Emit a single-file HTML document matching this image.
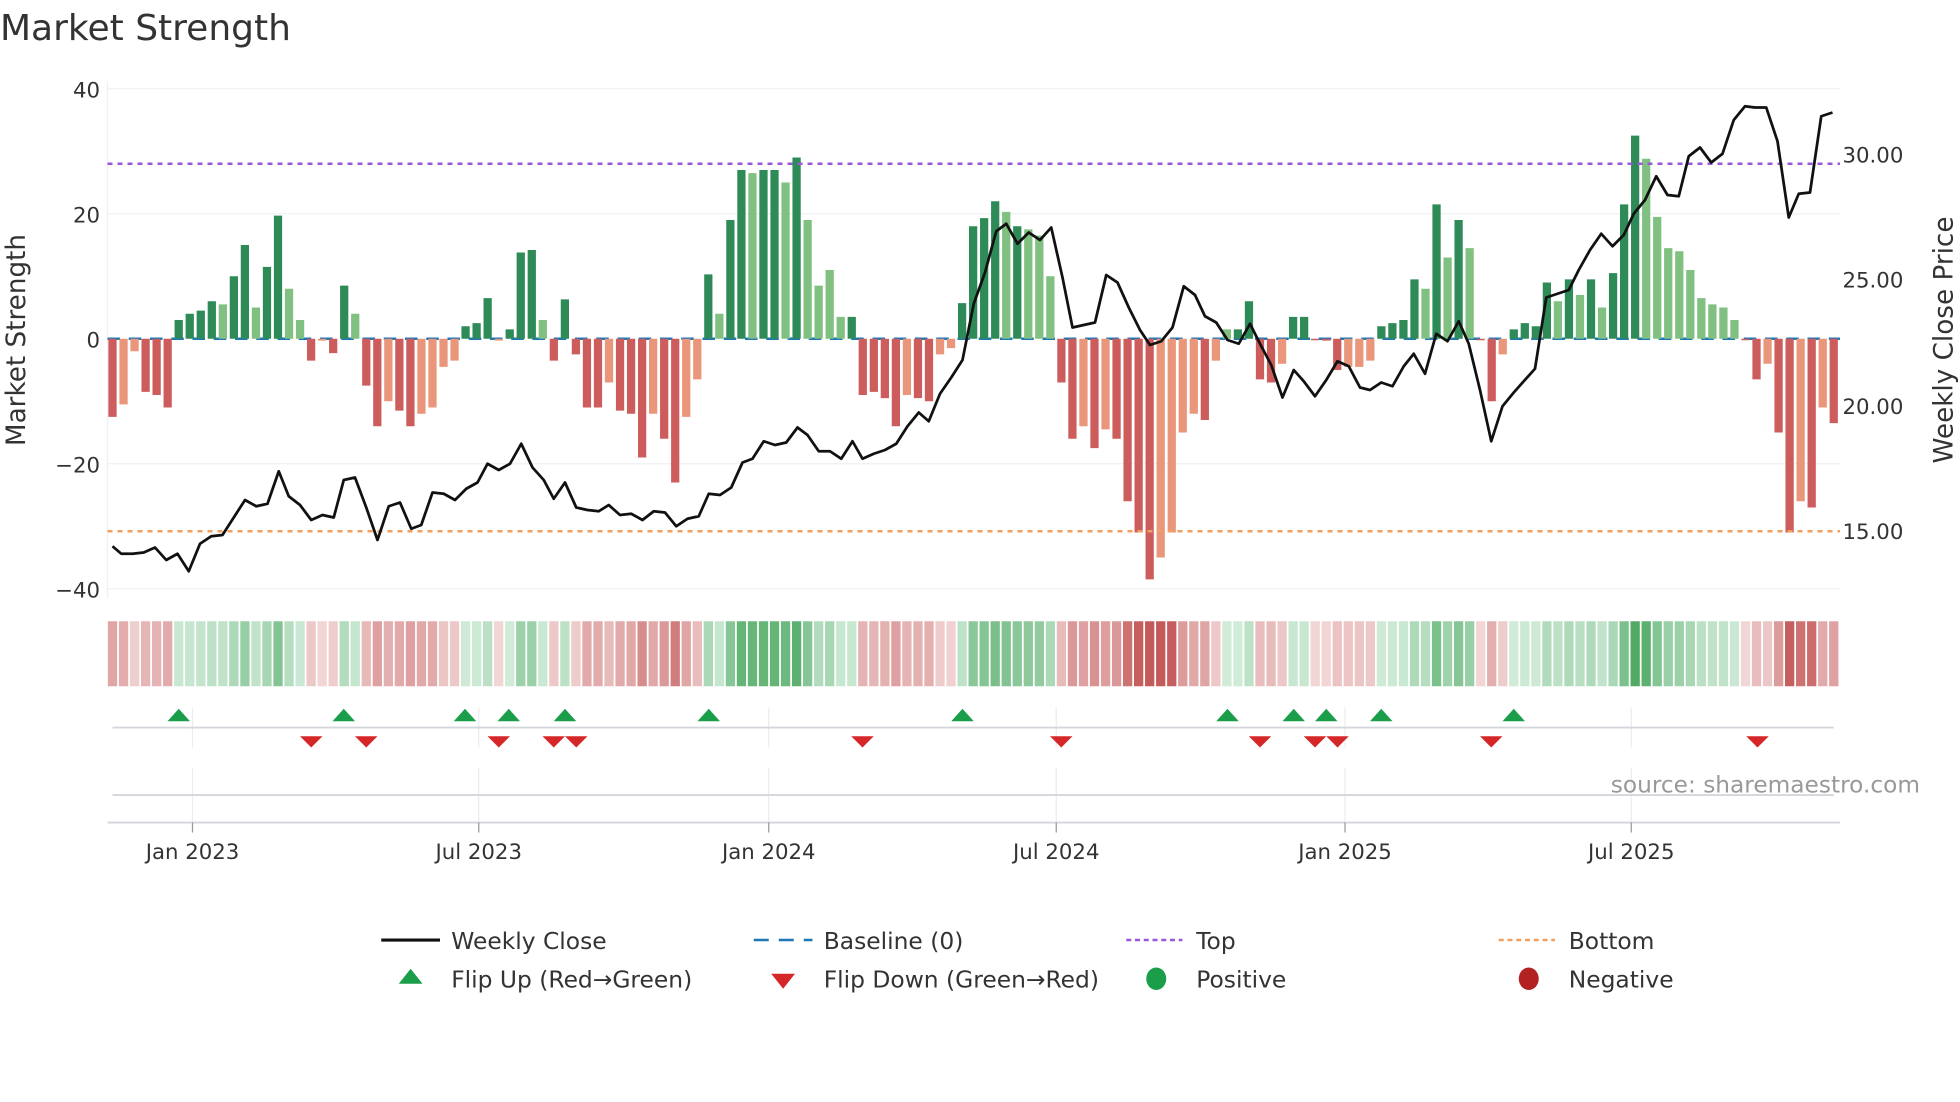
<!DOCTYPE html>
<html><head><meta charset="utf-8"><style>
html,body{margin:0;padding:0;background:#fff;width:1960px;height:1102px;overflow:hidden}
svg{display:block}
text{font-family:"DejaVu Sans","Liberation Sans",sans-serif;fill:#333}
</style></head><body>
<svg id="s" width="1960" height="1102" viewBox="0 0 1568 881.6" xmlns="http://www.w3.org/2000/svg">
<text x="0" y="32" font-size="28.8">Market Strength</text>
<g stroke="#eef0f4" stroke-width="1">
<line x1="86" x2="1472" y1="71" y2="71"/><line x1="86" x2="1472" y1="171" y2="171"/>
<line x1="86" x2="1472" y1="371" y2="371"/><line x1="86" x2="1472" y1="471" y2="471"/>
<line x1="86" x2="86" y1="65" y2="478"/>
</g>
<g font-size="17" text-anchor="end">
<text x="80" y="78">40</text><text x="80" y="178">20</text><text x="80" y="278">0</text>
<text x="80" y="378">−20</text><text x="80" y="478">−40</text></g>
<g font-size="17"><text x="1474" y="130">30.00</text><text x="1474" y="230">25.00</text>
<text x="1474" y="331">20.00</text><text x="1474" y="431">15.00</text></g>
<text font-size="21" transform="translate(20,272) rotate(-90)" text-anchor="middle">Market Strength</text>
<text font-size="21" transform="translate(1562,272) rotate(-90)" text-anchor="middle">Weekly Close Price</text>
<line x1="86" x2="1472" y1="271" y2="271" stroke="#1f77b4" stroke-width="2" stroke-dasharray="10,7"/>
<g id="bars"></g>
<line x1="86" x2="1472" y1="131" y2="131" stroke="#9b59d9" stroke-width="2" stroke-dasharray="4,4"/>
<line x1="86" x2="1472" y1="425" y2="425" stroke="#f0a060" stroke-width="2" stroke-dasharray="4,4"/>
<polyline id="price" fill="none" stroke="#111" stroke-width="2.2" stroke-linejoin="round"/>
<g id="heat"></g>
<g stroke="#eaecf0" stroke-width="1">
<line x1="154" x2="154" y1="566" y2="598"/><line x1="383" x2="383" y1="566" y2="598"/><line x1="615" x2="615" y1="566" y2="598"/><line x1="845" x2="845" y1="566" y2="598"/><line x1="1076" x2="1076" y1="566" y2="598"/><line x1="1305" x2="1305" y1="566" y2="598"/>
<line x1="154" x2="154" y1="614" y2="660"/><line x1="383" x2="383" y1="614" y2="660"/><line x1="615" x2="615" y1="614" y2="660"/><line x1="845" x2="845" y1="614" y2="660"/><line x1="1076" x2="1076" y1="614" y2="660"/><line x1="1305" x2="1305" y1="614" y2="660"/>
</g>
<line x1="90" x2="1467" y1="582" y2="582" stroke="#d4d6dc" stroke-width="1.5"/>
<line x1="90" x2="1467" y1="636" y2="636" stroke="#d4d6dc" stroke-width="1.5"/>
<line x1="86" x2="1472" y1="658" y2="658" stroke="#d4d6dc" stroke-width="1.5"/>
<g id="flips"></g>
<text x="1536" y="634" font-size="18.6" text-anchor="end" style="fill:#999">source: sharemaestro.com</text>
<g stroke="#999" stroke-width="1"><line x1="154" x2="154" y1="658" y2="666"/><line x1="383" x2="383" y1="658" y2="666"/><line x1="615" x2="615" y1="658" y2="666"/><line x1="845" x2="845" y1="658" y2="666"/><line x1="1076" x2="1076" y1="658" y2="666"/><line x1="1305" x2="1305" y1="658" y2="666"/></g>
<g font-size="17" text-anchor="middle">
<text x="154" y="687">Jan 2023</text><text x="383" y="687">Jul 2023</text><text x="615" y="687">Jan 2024</text>
<text x="845" y="687">Jul 2024</text><text x="1076" y="687">Jan 2025</text><text x="1305" y="687">Jul 2025</text></g>
<g font-size="18.7">
<line x1="305" x2="352" y1="752" y2="752" stroke="#111" stroke-width="2.5"/><text x="361" y="759">Weekly Close</text>
<line x1="603" x2="650" y1="752" y2="752" stroke="#1f77b4" stroke-width="2" stroke-dasharray="12,8"/><text x="659" y="759">Baseline (0)</text>
<line x1="901" x2="946" y1="752" y2="752" stroke="#9b59d9" stroke-width="2" stroke-dasharray="4,3"/><text x="957" y="759">Top</text>
<line x1="1199" x2="1244" y1="752" y2="752" stroke="#f0a060" stroke-width="2" stroke-dasharray="4,3"/><text x="1255" y="759">Bottom</text>
<polygon points="319,787 338,787 328.5,775" fill="#1a9e4a"/><text x="361" y="790">Flip Up (Red→Green)</text>
<polygon points="617,779 636,779 626.5,791" fill="#d62728"/><text x="659" y="790">Flip Down (Green→Red)</text>
<ellipse cx="925" cy="783" rx="8" ry="9" fill="#1a9e4a"/><text x="957" y="790">Positive</text>
<ellipse cx="1223" cy="783" rx="8" ry="9" fill="#b22222"/><text x="1255" y="790">Negative</text>
</g>
</svg>
<script>
var NS="http://www.w3.org/2000/svg";
var v=[[-12.5,0],[-10.5,1],[-2,1],[-8.5,0],[-9,0],[-11,0],[3,0],[4,0],[4.5,0],[6,0],[5.5,1],[10,0],[15,0],[5,1],[11.5,0],[19.7,0],[8,1],[3,1],[-3.5,0],[-0.3,1],[-2.3,0],[8.5,0],[4,1],[-7.5,0],[-14,0],[-10,1],[-11.5,0],[-14,0],[-12,1],[-11,1],[-4.5,1],[-3.5,1],[2,0],[2.5,0],[6.5,0],[-0.3,1],[1.5,0],[13.8,0],[14.2,0],[3,1],[-3.5,0],[6.3,0],[-2.5,0],[-11,0],[-11,0],[-7,1],[-11.5,0],[-12,0],[-19,0],[-12,1],[-16,0],[-23,0],[-12.5,1],[-6.5,1],[10.3,0],[4,1],[19,0],[27,0],[26.5,1],[27,0],[27,0],[25,1],[29,0],[19,1],[8.5,1],[11,1],[3.5,1],[3.5,0],[-9,0],[-8.5,0],[-9.5,0],[-14,0],[-9,1],[-9.5,0],[-10,0],[-2.5,1],[-1.5,1],[5.7,0],[18,0],[19.3,0],[22,0],[20.3,1],[18,0],[17.5,1],[16.5,1],[10,1],[-7,0],[-16,0],[-14,1],[-17.5,0],[-14.5,1],[-16,0],[-26,0],[-31,0],[-38.5,0],[-35,1],[-31,1],[-15,1],[-12,1],[-13,0],[-3.5,1],[1.5,1],[1.5,0],[6,0],[-6.5,0],[-7,0],[-4,1],[3.5,0],[3.5,0],[-0.2,0],[-0.3,0],[-5,0],[-4.5,1],[-4.5,1],[-3.5,1],[2,0],[2.5,0],[3,0],[9.5,0],[8,1],[21.5,0],[13,1],[19,0],[14.5,1],[-0.2,0],[-10,0],[-2.5,1],[1.5,0],[2.5,0],[2,0],[9,0],[6,1],[9.5,0],[7,1],[9.5,0],[5,1],[10.5,0],[21.5,0],[32.5,0],[28.8,1],[19.5,1],[14.5,1],[14,1],[11,1],[6.5,1],[5.5,1],[5,1],[3,1],[-0.2,0],[-6.5,0],[-4,1],[-15,0],[-31,0],[-26,1],[-27,0],[-11,1],[-13.5,0]];
var n=v.length, step=(1467-90)/(n-1);
var bars=document.getElementById("bars"),heat=document.getElementById("heat");
function mix(a,b,t){return "rgb("+a.map(function(x,i){return Math.round(x+(b[i]-x)*t)}).join(",")+")";}
for(var i=0;i<n;i++){
 var x=90+i*step,val=v[i][0],lt=v[i][1];
 var r=document.createElementNS(NS,"rect");
 var h=Math.max(Math.abs(val)*5,1.2);
 r.setAttribute("x",x-3.3);r.setAttribute("width",6.6);
 r.setAttribute("y",val>=0?271-h:271);r.setAttribute("height",h);
 r.setAttribute("fill",val>=0?(lt?"#80c080":"#2e8b57"):(lt?"#e9967a":"#cd5c5c"));
 bars.appendChild(r);
 var q=document.createElementNS(NS,"rect");
 q.setAttribute("x",x-4.4+0.7);q.setAttribute("width",step-1.4);q.setAttribute("y",497);q.setAttribute("height",52);
 var t=Math.min(Math.abs(val)/32,1);
 q.setAttribute("fill",val>=0?mix([214,238,222],[80,170,100],t):mix([242,214,214],[196,90,90],t));
 heat.appendChild(q);
}
document.getElementById("price").setAttribute("points","90,437 97,443 106,443 115,442 124,438 133,448 142,443 151,457 160,435 169,429 178,428 187,414 196,400 205,405 214,403 223,377 231,397 240,404 249,416 258,412 267,414 275,384 284,382 293,406 302,432 311,405 320,402 329,423 337,420 346,394 355,395 364,400 373,391 382,386 390,371 399,376 408,371 417,355 426,374 435,384 443,399 452,386 461,406 470,408 479,409 487,404 496,412 505,411 514,416 523,409 532,410 541,421 550,415 559,413 567,395 576,396 585,390 594,370 602,367 611,353 620,356 629,354 638,342 646,348 655,361 664,361 673,367 682,353 690,367 699,363 708,360 717,355 726,341 735,330 743,337 752,315 761,302 770,288 779,243 788,218 797,185 805,179 814,195 823,186 832,192 841,182 850,222 858,262 867,260 876,258 885,220 894,226 903,246 912,264 920,276 929,273 938,262 947,229 956,236 964,253 973,258 982,272 991,275 1000,259 1008,275 1017,292 1026,318 1035,296 1043,305 1052,317 1061,304 1070,289 1079,293 1088,310 1096,312 1105,306 1114,309 1123,293 1131,283 1140,299 1149,267 1158,273 1167,257 1175,275 1184,312 1193,353 1202,325 1211,314 1219,305 1228,295 1237,238 1246,235 1255,232 1263,216 1272,200 1281,187 1290,197 1299,188 1307,171 1316,160 1325,141 1334,156 1343,157 1351,125 1360,118 1369,130 1378,123 1387,96 1396,85 1404,86 1413,86 1422,113 1431,174 1439,155 1448,154 1457,93 1466,90");
var fl=document.getElementById("flips");
[143,275,372,407,452,567,770,982,1035,1061,1105,1211].forEach(function(x){var p=document.createElementNS(NS,"polygon");p.setAttribute("points",(x-9)+",577 "+(x+9)+",577 "+x+",567");p.setAttribute("fill","#1a9e4a");fl.appendChild(p);});
[249,293,399,443,461,690,849,1008,1052,1070,1193,1406].forEach(function(x){var p=document.createElementNS(NS,"polygon");p.setAttribute("points",(x-9)+",589 "+(x+9)+",589 "+x+",598");p.setAttribute("fill","#d62728");fl.appendChild(p);});
</script>
</body></html>
